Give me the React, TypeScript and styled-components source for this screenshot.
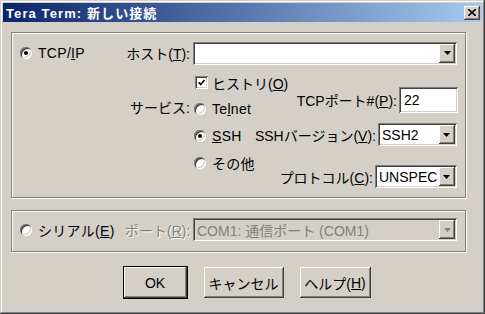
import styled, { createGlobalStyle } from "styled-components";

const GlobalStyle = createGlobalStyle`
  html, body {
    margin: 0;
    padding: 0;
    background: #d4d0c8;
  }
  body {
    font-family: "Liberation Sans", Arial, "Noto Sans CJK JP", sans-serif;
    font-size: 14px;
    color: #000;
  }
`;

const raised = `
  box-shadow: inset -1px -1px #404040, inset 1px 1px #fff,
    inset -2px -2px #808080, inset 2px 2px #d4d0c8;
`;

const sunken = `
  box-shadow: inset 1px 1px #808080, inset -1px -1px #fff,
    inset 2px 2px #404040, inset -2px -2px #d4d0c8;
`;

const Window = styled.div`
  width: 485px;
  height: 314px;
  box-sizing: border-box;
  padding: 3px;
  background: #d4d0c8;
  display: flex;
  flex-direction: column;
  box-shadow: inset -1px -1px #404040, inset 1px 1px #d4d0c8,
    inset -2px -2px #808080, inset 2px 2px #fff;
`;

const TitleBar = styled.div`
  height: 19px;
  display: flex;
  align-items: center;
  padding: 0 2px 0 3px;
  background: linear-gradient(to right, #0a246a, #a6caf0);
  color: #fff;
  font-size: 13px;
  font-weight: bold;
  letter-spacing: 1.1px;
`;

const CloseBtn = styled.div`
  margin-left: auto;
  width: 16px;
  height: 14px;
  background: #d4d0c8;
  display: flex;
  align-items: center;
  justify-content: center;
  ${raised}
`;

const Content = styled.div`
  width: 455px;
  padding: 10px 0 0 8px;
  display: flex;
  flex-direction: column;
`;

const Group = styled.div<{ $pt: number; $pb: number }>`
  border: 1px solid #808080;
  box-shadow: inset 1px 1px #fff, 1px 1px #fff;
  display: flex;
  padding: ${(p) => p.$pt}px 8px ${(p) => p.$pb}px 8px;
`;

const LeftCol = styled.div`
  width: 105px;
  flex: none;
`;

const RightCol = styled.div`
  flex: 1;
  min-width: 0;
  display: flex;
  flex-direction: column;
`;

const OptionRow = styled.div<{ $h: number }>`
  height: ${(p) => p.$h}px;
  display: flex;
  align-items: center;
  gap: 6px;
  white-space: nowrap;
  letter-spacing: 0.3px;
`;

const Radio = styled.span<{ $on?: boolean }>`
  width: 12px;
  height: 12px;
  flex: none;
  border-radius: 50%;
  background: #fff;
  position: relative;
  box-shadow: inset 1px 1px #808080, inset -1px -1px #fff,
    inset 2px 2px #404040, inset -2px -2px #d4d0c8;
  &::after {
    content: "";
    display: ${(p) => (p.$on ? "block" : "none")};
    position: absolute;
    left: 4px;
    top: 4px;
    width: 4px;
    height: 4px;
    border-radius: 50%;
    background: #000;
  }
`;

const CheckBox = styled.span`
  width: 13px;
  height: 13px;
  flex: none;
  background: #fff;
  display: flex;
  align-items: center;
  justify-content: center;
  ${sunken}
`;

const FieldLabel = styled.div<{ $disabled?: boolean }>`
  width: 68px;
  flex: none;
  box-sizing: border-box;
  padding-right: 3px;
  text-align: right;
  white-space: nowrap;
  color: ${(p) => (p.$disabled ? "#808080" : "#000")};
  text-shadow: ${(p) => (p.$disabled ? "1px 1px #fff" : "none")};
`;

const HostRow = styled.div`
  height: 24px;
  display: flex;
  align-items: center;
`;

const CheckRow = styled.div`
  margin-top: 11px;
  height: 13px;
  padding-left: 70px;
  display: flex;
  align-items: center;
  gap: 4px;
  white-space: nowrap;
`;

const ServiceArea = styled.div`
  margin-top: -2px;
  display: flex;
`;

const ServiceLabel = styled(FieldLabel)`
  padding-top: 8px;
  line-height: 27px;
`;

const RadioCol = styled.div`
  display: flex;
  flex-direction: column;
  padding: 8px 0 0 1px;
`;

const ControlCol = styled.div`
  margin-left: auto;
  display: flex;
  flex-direction: column;
  align-items: flex-end;
`;

const ControlRow = styled.div<{ $h: number; $mt: number; $mr: number }>`
  height: ${(p) => p.$h}px;
  margin-top: ${(p) => p.$mt}px;
  margin-right: ${(p) => p.$mr}px;
  display: flex;
  align-items: center;
  gap: 2px;
  white-space: nowrap;
`;

const Combo = styled.div<{ $w?: number; $disabled?: boolean }>`
  height: 23px;
  box-sizing: border-box;
  width: ${(p) => (p.$w ? `${p.$w}px` : "auto")};
  flex: ${(p) => (p.$w ? "none" : "1")};
  min-width: 0;
  padding: 2px;
  display: flex;
  align-items: center;
  background: ${(p) => (p.$disabled ? "#d4d0c8" : "#fff")};
  color: ${(p) => (p.$disabled ? "#808080" : "#000")};
  ${sunken}
`;

const ComboText = styled.span`
  flex: 1;
  padding-left: 2px;
  white-space: nowrap;
  overflow: hidden;
`;

const DropBtn = styled.span`
  width: 16px;
  height: 19px;
  flex: none;
  background: #d4d0c8;
  display: flex;
  align-items: center;
  justify-content: center;
  ${raised}
`;

const TextField = styled.div`
  width: 59px;
  height: 26px;
  box-sizing: border-box;
  padding: 2px 5px;
  display: flex;
  align-items: center;
  background: #fff;
  ${sunken}
`;

const Group2 = styled(Group)`
  margin-top: 12px;
  align-items: center;
`;

const SerialRow = styled.div`
  flex: 1;
  min-width: 0;
  display: flex;
  align-items: center;
`;

const ButtonRow = styled.div`
  margin-top: 14px;
  padding-left: 16px;
  display: flex;
  justify-content: center;
  align-items: center;
  gap: 16px;
`;

const Button = styled.div<{ $w: number; $default?: boolean }>`
  width: ${(p) => p.$w}px;
  height: ${(p) => (p.$default ? 33 : 31)}px;
  box-sizing: border-box;
  display: flex;
  align-items: center;
  justify-content: center;
  background: #d4d0c8;
  white-space: nowrap;
  border: ${(p) => (p.$default ? "1px solid #000" : "none")};
  ${raised}
`;

const Arrow = ({ color = "#000" }: { color?: string }) => (
  <svg width="7" height="4" viewBox="0 0 7 4">
    <path d="M0 0h7L3.5 4z" fill={color} />
  </svg>
);

const DropDown = ({ text, w, disabled }: { text: string; w?: number; disabled?: boolean }) => (
  <Combo $w={w} $disabled={disabled}>
    <ComboText>{text}</ComboText>
    <DropBtn>
      <Arrow color={disabled ? "#808080" : "#000"} />
    </DropBtn>
  </Combo>
);

export default function App() {
  return (
    <>
      <GlobalStyle />
      <Window>
        <TitleBar>
          Tera Term: 新しい接続
          <CloseBtn>
            <svg width="8" height="7" viewBox="0 0 8 7">
              <path d="M0 0L8 7M8 0L0 7" stroke="#000" strokeWidth="1.6" />
            </svg>
          </CloseBtn>
        </TitleBar>
        <Content>
          <Group $pt={8} $pb={9}>
            <LeftCol>
              <OptionRow $h={24}>
                <Radio $on />
                <span>
                  TCP/<u>I</u>P
                </span>
              </OptionRow>
            </LeftCol>
            <RightCol>
              <HostRow>
                <FieldLabel>
                  ホスト(<u>T</u>):
                </FieldLabel>
                <DropDown text="" />
              </HostRow>
              <CheckRow>
                <CheckBox>
                  <svg width="7" height="7" viewBox="0 0 7 7">
                    <path d="M0.5 3.2L2.7 5.5L6.5 1" stroke="#000" strokeWidth="1.6" fill="none" />
                  </svg>
                </CheckBox>
                <span>
                  ヒストリ(<u>O</u>)
                </span>
              </CheckRow>
              <ServiceArea>
                <ServiceLabel>サービス:</ServiceLabel>
                <RadioCol>
                  <OptionRow $h={27}>
                    <Radio />
                    <span>
                      Te<u>l</u>net
                    </span>
                  </OptionRow>
                  <OptionRow $h={27}>
                    <Radio $on />
                    <span>
                      <u>S</u>SH
                    </span>
                  </OptionRow>
                  <OptionRow $h={27}>
                    <Radio />
                    <span>その他</span>
                  </OptionRow>
                </RadioCol>
                <ControlCol>
                  <ControlRow $h={26} $mt={0} $mr={1}>
                    <span>
                      TCPポート#(<u>P</u>):
                    </span>
                    <TextField>22</TextField>
                  </ControlRow>
                  <ControlRow $h={23} $mt={10} $mr={2}>
                    <span>
                      SSHバージョン(<u>V</u>):
                    </span>
                    <DropDown text="SSH2" w={79} />
                  </ControlRow>
                  <ControlRow $h={23} $mt={19} $mr={2}>
                    <span>
                      プロトコル(<u>C</u>):
                    </span>
                    <DropDown text="UNSPEC" w={82} />
                  </ControlRow>
                </ControlCol>
              </ServiceArea>
            </RightCol>
          </Group>
          <Group2 $pt={7} $pb={10}>
            <LeftCol>
              <OptionRow $h={23}>
                <Radio />
                <span>
                  シリアル(<u>E</u>)
                </span>
              </OptionRow>
            </LeftCol>
            <SerialRow>
              <FieldLabel $disabled>
                ポート(<u>R</u>):
              </FieldLabel>
              <DropDown text="COM1: 通信ポート (COM1)" disabled />
            </SerialRow>
          </Group2>
          <ButtonRow>
            <Button $w={65} $default>
              OK
            </Button>
            <Button $w={80}>キャンセル</Button>
            <Button $w={71}>
              ヘルプ(<u>H</u>)
            </Button>
          </ButtonRow>
        </Content>
      </Window>
    </>
  );
}
